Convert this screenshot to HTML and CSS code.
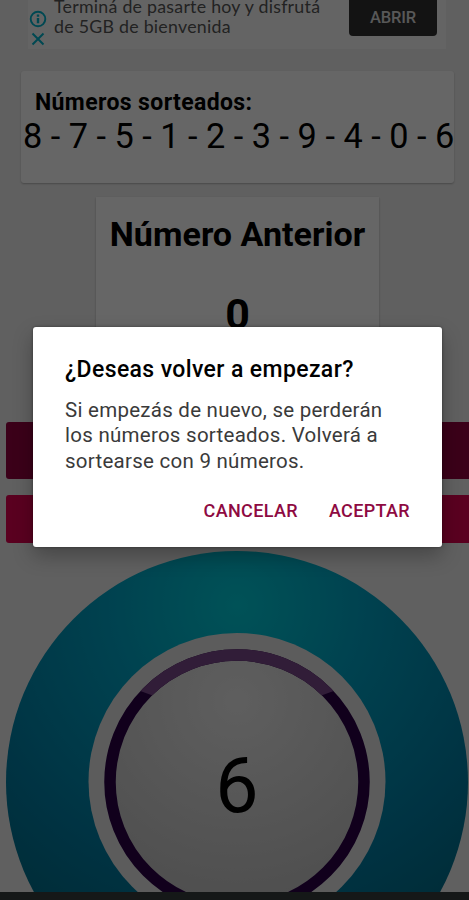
FILE: index.html
```html
<!DOCTYPE html>
<html lang="es">
<head>
    <meta charset="UTF-8">
    <title>Sorteo</title>
    <link rel="stylesheet" href="styles.css">
</head>
<body>
<div class="screen">
    <div class="ad">
        <div class="ad-icons">
            <svg width="18" height="18" viewBox="0 0 18 18" fill="none" stroke="#00b3cc" stroke-width="1.9">
                <circle cx="9" cy="9" r="7.3"/>
                <path d="M9 8v5.2M9 4.6v2.1" stroke-width="2.4"/>
            </svg>
            <svg width="18" height="18" viewBox="0 0 18 18" fill="none" stroke="#00b3cc" stroke-width="2">
                <path d="M3.5 3.5l11 11M14.5 3.5l-11 11"/>
            </svg>
        </div>
        <p class="ad-text">Terminá de pasarte hoy y disfrutá<br>de 5GB de bienvenida</p>
        <button class="ad-button">ABRIR</button>
    </div>
    <div class="card drawn">
        <h2>Números sorteados:</h2>
        <p class="numbers">8 - 7 - 5 - 1 - 2 - 3 - 9 - 4 - 0 - 6</p>
    </div>
    <div class="card previous">
        <h1>Número Anterior</h1>
        <p class="previous-number">0</p>
    </div>
    <div class="bar bar-dark"></div>
    <div class="bar bar-red"></div>
    <div class="ball">
        <svg width="469" height="341" viewBox="0 0 469 341">
            <defs>
                <radialGradient id="blue" gradientUnits="userSpaceOnUse" cx="237" cy="54" r="370">
                    <stop offset="0" stop-color="#00cdda"/>
                    <stop offset="0.35" stop-color="#00a4c6"/>
                    <stop offset="0.75" stop-color="#007fa6"/>
                    <stop offset="1" stop-color="#006e8a"/>
                </radialGradient>
                <radialGradient id="grey" gradientUnits="userSpaceOnUse" cx="237" cy="150" r="240">
                    <stop offset="0" stop-color="#ececec"/>
                    <stop offset="1" stop-color="#bebebe"/>
                </radialGradient>
                <clipPath id="shine">
                    <path d="M130 60v76.3l107 39 107-39V60z"/>
                </clipPath>
            </defs>
            <circle cx="237" cy="231" r="231" fill="url(#blue)"/>
            <circle cx="237" cy="230.5" r="148.5" fill="#e6e6e6"/>
            <circle cx="237" cy="231" r="127" fill="url(#grey)" stroke="#2b0048" stroke-width="11.5"/>
            <circle cx="237" cy="231" r="127" fill="none" stroke="#7b4a8c" stroke-width="11.5" clip-path="url(#shine)"/>
        </svg>
        <span class="ball-number">6</span>
    </div>
    <div class="navbar"></div>
</div>
<div class="overlay">
    <div class="dialog">
        <h3>¿Deseas volver a empezar?</h3>
        <p>Si empezás de nuevo, se perderán<br>los números sorteados. Volverá a<br>sortearse con 9 números.</p>
        <div class="actions">
            <button class="cancel">CANCELAR</button>
            <button class="accept">ACEPTAR</button>
        </div>
    </div>
</div>
</body>
</html>
```

FILE: styles.css
```css
*{
    box-sizing: border-box;
}
body{
    margin: 0;
    overflow: hidden;
    font-family: Roboto, "Liberation Sans", sans-serif;
    color: #000;
}
h1, h2, h3, p{
    margin: 0;
}
button{
    border: 0;
    padding: 0;
    background: none;
    font-family: inherit;
}
.screen{
    display: flex;
    flex-direction: column;
    width: 469px;
    height: 900px;
    overflow: hidden;
    background: #f0f0f0;
}
.ad{
    display: flex;
    flex: none;
    width: 418px;
    height: 49px;
    margin-left: 28px;
    background: #fafafa;
}
.ad-icons{
    display: flex;
    flex-direction: column;
    gap: 2px;
    width: 26px;
    padding-top: 10px;
    padding-left: 1px;
}
.ad-text{
    width: 295px;
    margin-top: -3px;
    font-family: Lato, sans-serif;
    font-size: 17.8px;
    line-height: 19.5px;
    letter-spacing: 0.25px;
    color: #555;
    white-space: nowrap;
}
.ad-button{
    width: 88px;
    height: 36px;
    padding-bottom: 2px;
    border-radius: 0 0 4px 4px;
    background: #303030;
    color: #ddd;
    font-size: 16.5px;
    letter-spacing: -0.2px;
    font-weight: 500;
}
.card{
    flex: none;
    background: #fff;
    box-shadow: 0 1px 2px rgba(0,0,0,0.25);
}
.drawn{
    width: 433px;
    height: 112px;
    margin: 22px 0 0 21px;
    padding-top: 17px;
    border-radius: 3px;
}
.drawn h2{
    padding-left: 14px;
    font-size: 23px;
    line-height: 29px;
    letter-spacing: 0.38px;
}
.numbers{
    padding-left: 2px;
    margin-top: -1px;
    font-size: 34.3px;
    line-height: 40px;
    white-space: nowrap;
}
.previous{
    width: 283px;
    height: 200px;
    margin: 14px 0 0 96px;
    padding-top: 16px;
    text-align: center;
}
.previous h1{
    font-size: 34.1px;
    line-height: 42px;
    white-space: nowrap;
}
.previous-number{
    margin-top: 32px;
    font-size: 43px;
    font-weight: 700;
    line-height: 54px;
}
.bar{
    flex: none;
    margin-left: 6px;
    border-radius: 3px 0 0 3px;
}
.bar-dark{
    height: 57px;
    margin-top: 25px;
    background: #930040;
}
.bar-red{
    height: 48px;
    margin-top: 16px;
    background: #e00050;
}
.ball{
    position: relative;
    flex: none;
    height: 341px;
    margin-top: 8px;
}
.ball svg{
    display: block;
}
.ball-number{
    position: absolute;
    top: 190px;
    left: 0;
    width: 474px;
    text-align: center;
    font-size: 77px;
    line-height: 90px;
}
.navbar{
    flex: none;
    height: 8px;
    background: #363d3d;
}
.overlay{
    position: absolute;
    inset: 0;
    padding: 327px 0 0 33px;
    background: rgba(0,0,0,0.6);
}
.dialog{
    width: 409px;
    height: 220px;
    padding: 29px 32px 0;
    border-radius: 3px;
    background: #fff;
    box-shadow: 0 9px 20px rgba(0,0,0,0.27), 0 0 3px rgba(0,0,0,0.4);
    white-space: nowrap;
}
.dialog h3{
    font-size: 23px;
    font-weight: 500;
    line-height: 28px;
    letter-spacing: 0.38px;
}
.dialog p{
    margin-top: 14px;
    font-size: 20.5px;
    line-height: 25.3px;
    letter-spacing: 0.26px;
    color: #3a3a3a;
}
.actions{
    display: flex;
    justify-content: flex-end;
    gap: 31px;
    margin-top: 25px;
}
.actions button{
    color: #8e0a42;
    font-size: 18px;
    font-weight: 500;
    line-height: 24px;
    letter-spacing: 0.35px;
}
```
